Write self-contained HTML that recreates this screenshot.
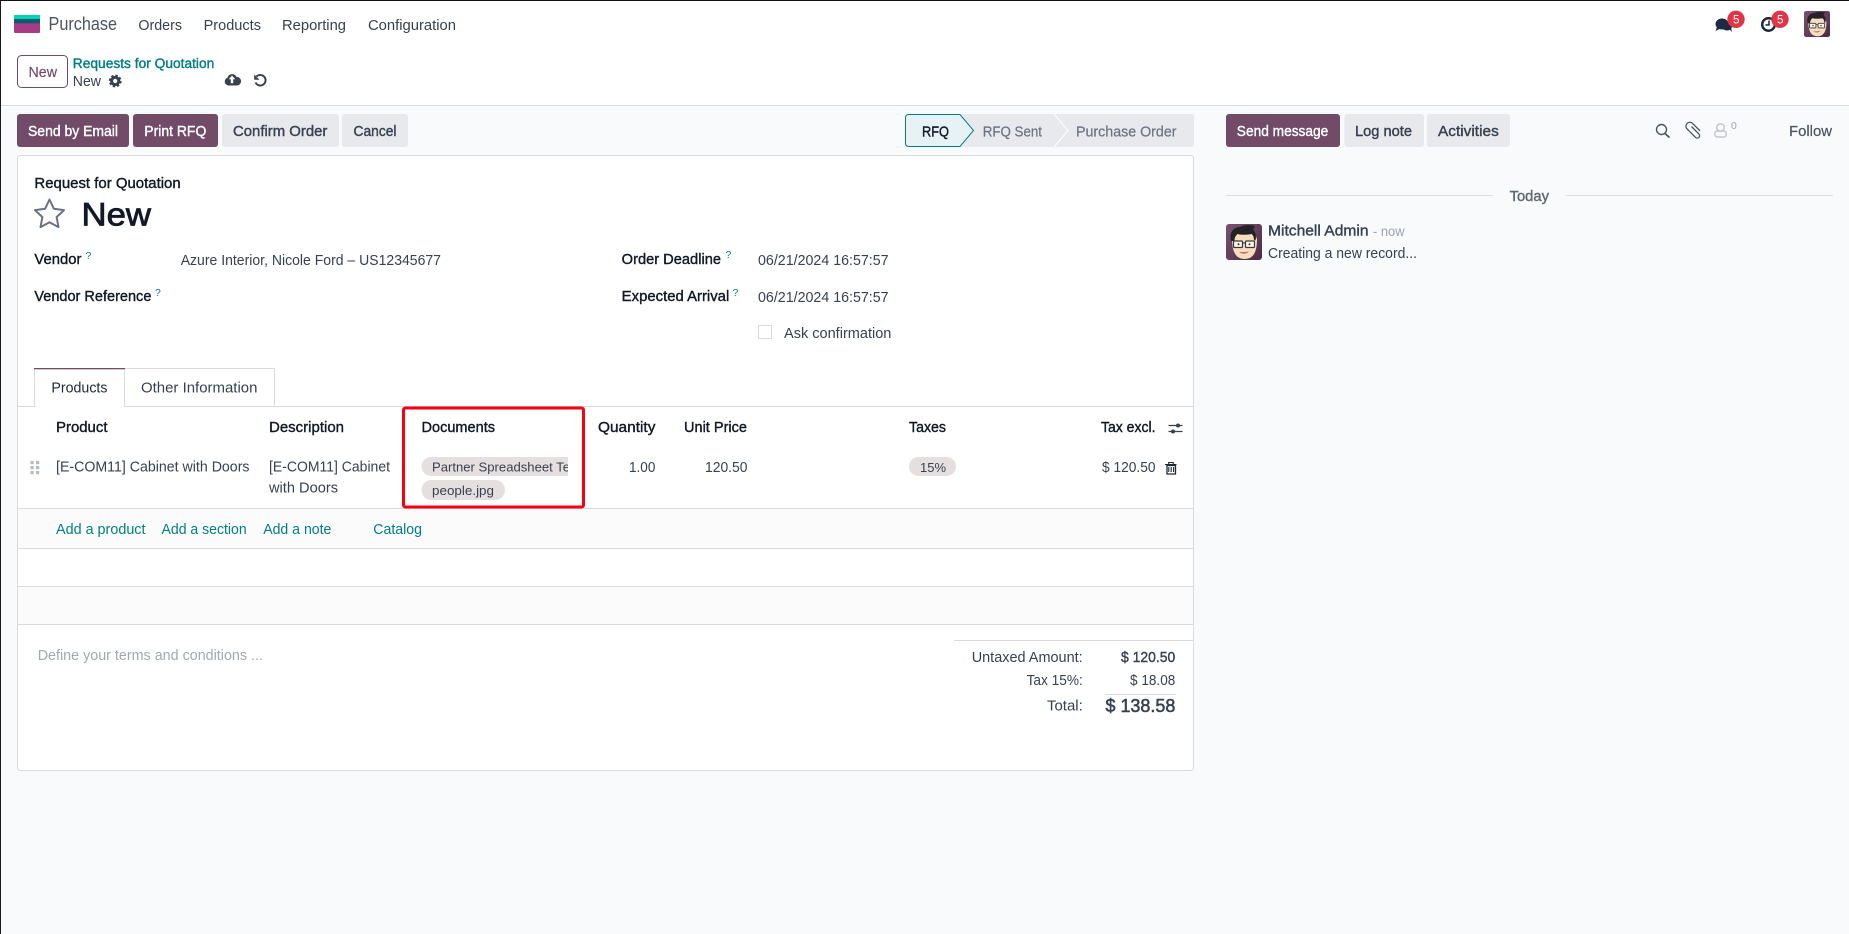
<!DOCTYPE html>
<html lang="en"><head><meta charset="utf-8"><title>Purchase - New</title>
<style>
html,body{margin:0;padding:0;background:#f9fafb;width:1849px;height:934px;overflow:hidden}
svg{display:block}
text{font-family:"Liberation Sans",Arial,sans-serif;font-size:14.5px;fill:#374151;white-space:pre}
.b{font-weight:400;stroke:#374151;stroke-width:.38px}
.d{fill:#111827}
.d.b{stroke:#111827}
.w{fill:#fff}
.w.b{stroke:#fff}
.t{fill:#017e84}
.t.b{stroke:#017e84}
.g{fill:#6b7280}
.g.b{stroke:#6b7280;stroke-width:.2px}
.h{font-size:10.5px;fill:#017e84}
</style></head><body>
<svg width="1849" height="934" viewBox="0 0 1849 934" xmlns="http://www.w3.org/2000/svg">
<defs>
<clipPath id="tagclip"><rect x="400" y="450" width="168" height="30"/></clipPath>
<linearGradient id="av" x1="0" y1="0" x2="1" y2="1"><stop offset="0" stop-color="#7a5270"/><stop offset="1" stop-color="#4a2c44"/></linearGradient>
<symbol id="avatar" viewBox="0 0 36 36">
<rect width="36" height="36" rx="3" fill="url(#av)"/>
<path d="M6 15c0 11 3 20 12.500 20S31 27 31 15l-2-5H9z" fill="#f8dcc0"/>
<path d="M5 17C3 8 8 3 14 3c3-2 9-2.500 15-1-1 2-1 2.500-2 3.500 3 3 3.500 7 2.500 11l-1.500-.5c0-3-1-5-2.500-6-5 1-10 1-14 0-2 2-3 3.500-3 7z" fill="#232326"/>
<rect x="7.500" y="17" width="9" height="6.500" rx="1" fill="#fbf3e8" stroke="#3a3a3c" stroke-width="1.200"/>
<rect x="19.500" y="17" width="9" height="6.500" rx="1" fill="#fbf3e8" stroke="#3a3a3c" stroke-width="1.200"/>
<path d="M16.500 19h3" stroke="#3a3a3c" stroke-width="1.100"/>
<circle cx="12.500" cy="20.300" r="1" fill="#333"/><circle cx="23.500" cy="20.300" r="1" fill="#333"/>
<path d="M13 28c3 2.300 7 2.300 10-.5-3 .7-7 .8-10 .5z" fill="#b5685a"/>
</symbol>
</defs>

<!-- page surfaces -->
<rect width="1849" height="934" fill="#f9fafb"/>
<rect width="1849" height="105" fill="#fff"/>
<rect y="105" width="1849" height="1" fill="#d8dadd"/>
<rect width="1849" height="1" fill="#111"/>
<rect width="1" height="934" fill="#1a1a1a"/>

<!-- nav -->
<rect x="14" y="15" width="26" height="18" rx="1" fill="#a63b87"/>
<path d="M14 16a1 1 0 0 1 1-1h24a1 1 0 0 1 1 1v3H14z" fill="#00d4b6"/>
<rect x="14" y="19" width="26" height="4.300" fill="#0c5c6e"/>
<text x="48.500" y="30" style="font-size:18.500px;fill:#4b5563" textLength="68.500" lengthAdjust="spacingAndGlyphs">Purchase</text>
<text x="138.400" y="30" textLength="43.600" lengthAdjust="spacingAndGlyphs">Orders</text>
<text x="203.600" y="30" textLength="57.400" lengthAdjust="spacingAndGlyphs">Products</text>
<text x="282" y="30" textLength="64" lengthAdjust="spacingAndGlyphs">Reporting</text>
<text x="368" y="30" textLength="88" lengthAdjust="spacingAndGlyphs">Configuration</text>

<!-- systray -->
<g fill="#1c2b3f">
<ellipse cx="1722" cy="24" rx="6.500" ry="5.500"/>
<path d="M1717 27l-1.500 4 5-2.500z"/>
<ellipse cx="1727" cy="26.500" rx="5" ry="4"/>
<path d="M1729 29l3 3-1-4z"/>
</g>
<circle cx="1768.500" cy="24.500" r="6.300" fill="#fff" stroke="#14263c" stroke-width="2.400"/>
<path d="M1769 20.500v4.500h-3.500" fill="none" stroke="#14263c" stroke-width="1.500"/>
<circle cx="1736" cy="19.300" r="8.700" fill="#e03546"/>
<circle cx="1780" cy="19.300" r="8.700" fill="#e03546"/>
<text class="w" x="1733" y="23.500" style="font-size:11.500px">5</text>
<text class="w" x="1777" y="23.500" style="font-size:11.500px">5</text>
<use href="#avatar" x="1804" y="11" width="26" height="26"/>

<!-- control panel -->
<rect x="17.500" y="55.500" width="50" height="32" rx="4" fill="#fff" stroke="#714b67"/>
<text class="b" x="28.500" y="77" style="fill:#714b67;stroke:#714b67;stroke-width:.15px" textLength="28.500" lengthAdjust="spacingAndGlyphs">New</text>
<text class="t b" x="72.800" y="68" style="font-size:13.500px" textLength="141.500" lengthAdjust="spacingAndGlyphs">Requests for Quotation</text>
<text x="72.800" y="86" textLength="28.200" lengthAdjust="spacingAndGlyphs">New</text>
<!-- gear -->
<circle cx="115.200" cy="81" r="3.600" fill="none" stroke="#374151" stroke-width="3"/>
<circle cx="115.200" cy="81" r="5.400" fill="none" stroke="#374151" stroke-width="2" stroke-dasharray="2.400 1.840"/>
<!-- cloud -->
<path d="M228.500 85.500a4 4 0 0 1-1-7.800 4.800 4.800 0 0 1 9-.8 4.300 4.300 0 0 1 .5 8.600z" fill="#374151"/>
<path d="M232 75.500l3.300 3.800h-2.100v4h-2.400v-4h-2.100z" fill="#fff"/>
<!-- undo -->
<path d="M256.500 76.500a5.300 5.300 0 1 1-1 6" fill="none" stroke="#374151" stroke-width="1.900"/>
<path d="M254.200 74.500v5.300h5.300z" fill="#374151"/>

<!-- action buttons -->
<rect x="17" y="114" width="112" height="33" rx="3" fill="#714b67"/>
<rect x="133" y="114" width="85" height="33" rx="3" fill="#714b67"/>
<rect x="222" y="114" width="117" height="33" rx="3" fill="#e7e9ed"/>
<rect x="342" y="114" width="66" height="33" rx="3" fill="#e7e9ed"/>
<text class="w b" x="28" y="136" textLength="90" lengthAdjust="spacingAndGlyphs">Send by Email</text>
<text class="w b" x="144.300" y="136" textLength="62" lengthAdjust="spacingAndGlyphs">Print RFQ</text>
<text class="b" x="233" y="136" textLength="94.400" lengthAdjust="spacingAndGlyphs">Confirm Order</text>
<text class="b" x="353.500" y="136" textLength="43" lengthAdjust="spacingAndGlyphs">Cancel</text>

<!-- statusbar -->
<rect x="905" y="114" width="289" height="33" rx="3" fill="#e7e9ed"/>
<path d="M1054 114l14 16.500-14 16.500" fill="none" stroke="#fff" stroke-width="1"/>
<path d="M908.500 114.500H960l13.500 16-13.500 16h-51.500a3 3 0 0 1-3-3v-26a3 3 0 0 1 3-3z" fill="#e6f2f3" stroke="#017e84"/>
<text class="d b" x="922" y="136.700" textLength="27" lengthAdjust="spacingAndGlyphs">RFQ</text>
<text class="g b" x="982.700" y="136.700" textLength="59.300" lengthAdjust="spacingAndGlyphs">RFQ Sent</text>
<text class="g b" x="1076" y="136.700" textLength="100.500" lengthAdjust="spacingAndGlyphs">Purchase Order</text>

<!-- card -->
<rect x="17.500" y="155.500" width="1176" height="615" rx="3" fill="#fff" stroke="#d8dadd"/>
<text class="d b" x="34.400" y="188" textLength="146.300" lengthAdjust="spacingAndGlyphs">Request for Quotation</text>
<path d="M49.500 199.500l4.400 9.300 10.100 1.300-7.400 7 1.900 10-9-4.900-9 4.900 1.900-10-7.400-7 10.100-1.300z" fill="#fff" stroke="#6b7280" stroke-width="2" stroke-linejoin="round"/>
<text class="d b" x="81.500" y="225.700" style="font-size:32px;stroke-width:.8px" textLength="69.500" lengthAdjust="spacingAndGlyphs">New</text>

<text class="d b" x="34.400" y="264" textLength="47" lengthAdjust="spacingAndGlyphs">Vendor</text>
<text class="h" x="85.500" y="259">?</text>
<text x="180.700" y="265" textLength="260.300" lengthAdjust="spacingAndGlyphs">Azure Interior, Nicole Ford – US12345677</text>
<text class="d b" x="34.400" y="301" textLength="117" lengthAdjust="spacingAndGlyphs">Vendor Reference</text>
<text class="h" x="155" y="296">?</text>

<text class="d b" x="621.700" y="264" textLength="99.300" lengthAdjust="spacingAndGlyphs">Order Deadline</text>
<text class="h" x="725.500" y="258">?</text>
<text x="758" y="265" textLength="130.600" lengthAdjust="spacingAndGlyphs">06/21/2024 16:57:57</text>
<text class="d b" x="621.700" y="301" textLength="107.600" lengthAdjust="spacingAndGlyphs">Expected Arrival</text>
<text class="h" x="732.500" y="296">?</text>
<text x="758" y="302" textLength="130.600" lengthAdjust="spacingAndGlyphs">06/21/2024 16:57:57</text>
<rect x="758.500" y="325.500" width="13" height="13" fill="#fff" stroke="#d8dadd"/>
<text x="784" y="338" textLength="107.400" lengthAdjust="spacingAndGlyphs">Ask confirmation</text>

<!-- tabs -->
<rect x="18" y="406" width="1175" height="1" fill="#d8dadd"/>
<path d="M124.500 406V368.500H274.500V406" fill="#fff" stroke="#d8dadd"/>
<rect x="34.500" y="368.500" width="90" height="39" fill="#fff"/>
<path d="M34.500 407V368.500" stroke="#d8dadd" fill="none"/>
<path d="M124.500 407V368.500" stroke="#d8dadd" fill="none"/>
<rect x="34" y="368" width="91" height="1.300" fill="#714b67"/>
<text x="51.400" y="392.700" style="fill:#1f2937" textLength="56.100" lengthAdjust="spacingAndGlyphs">Products</text>
<text x="141" y="392.700" textLength="116.400" lengthAdjust="spacingAndGlyphs">Other Information</text>

<!-- table head -->
<text class="d b" x="56" y="432" textLength="51.500" lengthAdjust="spacingAndGlyphs">Product</text>
<text class="d b" x="269" y="432" textLength="75" lengthAdjust="spacingAndGlyphs">Description</text>
<text class="d b" x="421.500" y="432" textLength="73.500" lengthAdjust="spacingAndGlyphs">Documents</text>
<text class="d b" x="598" y="432" textLength="57.400" lengthAdjust="spacingAndGlyphs">Quantity</text>
<text class="d b" x="684" y="432" textLength="63" lengthAdjust="spacingAndGlyphs">Unit Price</text>
<text class="d b" x="909" y="432" textLength="37" lengthAdjust="spacingAndGlyphs">Taxes</text>
<text class="d b" x="1101" y="432" textLength="54.500" lengthAdjust="spacingAndGlyphs">Tax excl.</text>
<g stroke="#374151" stroke-width="1.300" fill="#374151">
<path d="M1168.500 425.500h14M1168.500 431.500h14"/>
<circle cx="1178" cy="425.500" r="2" stroke="none"/>
<circle cx="1173" cy="431.500" r="2" stroke="none"/>
</g>

<!-- row -->
<g fill="#b4bac2">
<rect x="30.500" y="461" width="3.200" height="3.200"/><rect x="36" y="461" width="3.200" height="3.200"/>
<rect x="30.500" y="466" width="3.200" height="3.200"/><rect x="36" y="466" width="3.200" height="3.200"/>
<rect x="30.500" y="471" width="3.200" height="3.200"/><rect x="36" y="471" width="3.200" height="3.200"/>
</g>
<text x="56" y="471.700" textLength="193.500" lengthAdjust="spacingAndGlyphs">[E-COM11] Cabinet with Doors</text>
<text x="269" y="471.700" textLength="121" lengthAdjust="spacingAndGlyphs">[E-COM11] Cabinet</text>
<text x="269" y="492.700" textLength="69" lengthAdjust="spacingAndGlyphs">with Doors</text>
<g clip-path="url(#tagclip)">
<rect x="421.500" y="457" width="180" height="19" rx="9.500" fill="#e6dfdf"/>
<text x="432" y="471.700" style="font-size:13px" textLength="138" lengthAdjust="spacingAndGlyphs">Partner Spreadsheet Te</text>
</g>
<rect x="421.500" y="480" width="83.500" height="20" rx="10" fill="#e6dfdf"/>
<text x="432" y="495" style="font-size:13px" textLength="62" lengthAdjust="spacingAndGlyphs">people.jpg</text>
<text x="629" y="472" textLength="26.400" lengthAdjust="spacingAndGlyphs">1.00</text>
<text x="705" y="472" textLength="42.500" lengthAdjust="spacingAndGlyphs">120.50</text>
<rect x="909" y="457" width="47" height="19" rx="9.500" fill="#e6dfdf"/>
<text x="920" y="472" style="font-size:13px" textLength="26" lengthAdjust="spacingAndGlyphs">15%</text>
<text x="1102" y="472" textLength="53.500" lengthAdjust="spacingAndGlyphs">$ 120.50</text>
<path d="M1167 465.500h8.500v8.500h-8.500z" fill="none" stroke="#1f2937" stroke-width="1.300"/>
<path d="M1165 464.500h11.500M1168.700 464v-1.500h4.500v1.500M1168.800 467v5M1171.200 467v5M1173.600 467v5" fill="none" stroke="#1f2937" stroke-width="1.100"/>

<!-- add row and empties -->
<rect x="18" y="508.500" width="1175" height="40" fill="#fbfbfb"/>
<rect x="18" y="586.500" width="1175" height="38" fill="#fbfbfb"/>
<rect x="18" y="508" width="1175" height="1" fill="#d8dadd"/>
<rect x="18" y="548" width="1175" height="1" fill="#d8dadd"/>
<rect x="18" y="586" width="1175" height="1" fill="#d8dadd"/>
<rect x="18" y="624" width="1175" height="1" fill="#d8dadd"/>
<text class="t" x="56" y="534" textLength="89.500" lengthAdjust="spacingAndGlyphs">Add a product</text>
<text class="t" x="161.500" y="534" textLength="85.200" lengthAdjust="spacingAndGlyphs">Add a section</text>
<text class="t" x="263.200" y="534" textLength="68.200" lengthAdjust="spacingAndGlyphs">Add a note</text>
<text class="t" x="373.300" y="534" textLength="48.700" lengthAdjust="spacingAndGlyphs">Catalog</text>

<!-- red highlight -->
<rect x="403.500" y="408" width="180" height="99" rx="2" fill="none" stroke="#f7000f" stroke-width="3"/>

<!-- notes and totals -->
<text x="37.700" y="660" style="fill:#a3a8b0" textLength="225.300" lengthAdjust="spacingAndGlyphs">Define your terms and conditions ...</text>
<rect x="954" y="640" width="239" height="1" fill="#d8dadd"/>
<text x="971.700" y="662" textLength="111" lengthAdjust="spacingAndGlyphs">Untaxed Amount:</text>
<text class="b" x="1121" y="662" textLength="54.300" lengthAdjust="spacingAndGlyphs">$ 120.50</text>
<text x="1026.600" y="684.800" textLength="56.200" lengthAdjust="spacingAndGlyphs">Tax 15%:</text>
<text x="1130" y="684.800" textLength="45.300" lengthAdjust="spacingAndGlyphs">$ 18.08</text>
<rect x="1105" y="694" width="71" height="1" fill="#d8dadd"/>
<text x="1047" y="710.700" textLength="35.800" lengthAdjust="spacingAndGlyphs">Total:</text>
<text class="b" x="1105.500" y="712" style="font-size:18.500px;stroke-width:.55px" textLength="69.800" lengthAdjust="spacingAndGlyphs">$ 138.58</text>

<!-- chatter -->
<rect x="1226" y="114" width="114" height="33" rx="3" fill="#714b67"/>
<rect x="1344.400" y="114" width="79.600" height="33" rx="3" fill="#e7e9ed"/>
<rect x="1426.800" y="114" width="83.200" height="33" rx="3" fill="#e7e9ed"/>
<text class="w b" x="1236.800" y="136" textLength="91.500" lengthAdjust="spacingAndGlyphs">Send message</text>
<text class="b" x="1355" y="136" textLength="57" lengthAdjust="spacingAndGlyphs">Log note</text>
<text class="b" x="1438" y="136" textLength="60.800" lengthAdjust="spacingAndGlyphs">Activities</text>
<circle cx="1661.500" cy="129.500" r="5" fill="none" stroke="#4b5563" stroke-width="1.400"/>
<path d="M1665 133.500l4.500 4" stroke="#4b5563" stroke-width="1.700" fill="none"/>
<g transform="rotate(-45 1694 130.500)"><path d="M1698 135v-10.500a3.900 3.900 0 0 0-7.800 0v12a2.400 2.400 0 0 0 4.800 0v-10.500" fill="none" stroke="#4b5563" stroke-width="1.300"/></g>
<circle cx="1720.500" cy="127.500" r="3.800" fill="none" stroke="#c4c8cc" stroke-width="1.500"/>
<rect x="1714.800" y="131" width="11.500" height="6" rx="2.500" fill="none" stroke="#c4c8cc" stroke-width="1.500"/>
<text x="1731" y="129" style="font-size:10.500px;fill:#9ca3af">0</text>
<text class="b" x="1789" y="136" style="fill:#4b5563;stroke:#4b5563;stroke-width:.2px" textLength="43" lengthAdjust="spacingAndGlyphs">Follow</text>

<rect x="1226" y="195" width="267" height="1" fill="#dcdee1"/>
<rect x="1565.500" y="195" width="267.500" height="1" fill="#dcdee1"/>
<text class="b" x="1509.600" y="201" style="fill:#5f6773;stroke:#5f6773" textLength="39.400" lengthAdjust="spacingAndGlyphs">Today</text>
<use href="#avatar" x="1226" y="224" width="36" height="36"/>
<text class="b" x="1268" y="235.700" textLength="100.500" lengthAdjust="spacingAndGlyphs">Mitchell Admin</text>
<text x="1373" y="236" style="font-size:13.500px;fill:#9ca3af" textLength="31.500" lengthAdjust="spacingAndGlyphs">- now</text>
<text x="1268" y="258" textLength="149" lengthAdjust="spacingAndGlyphs">Creating a new record...</text>
</svg>
</body></html>
